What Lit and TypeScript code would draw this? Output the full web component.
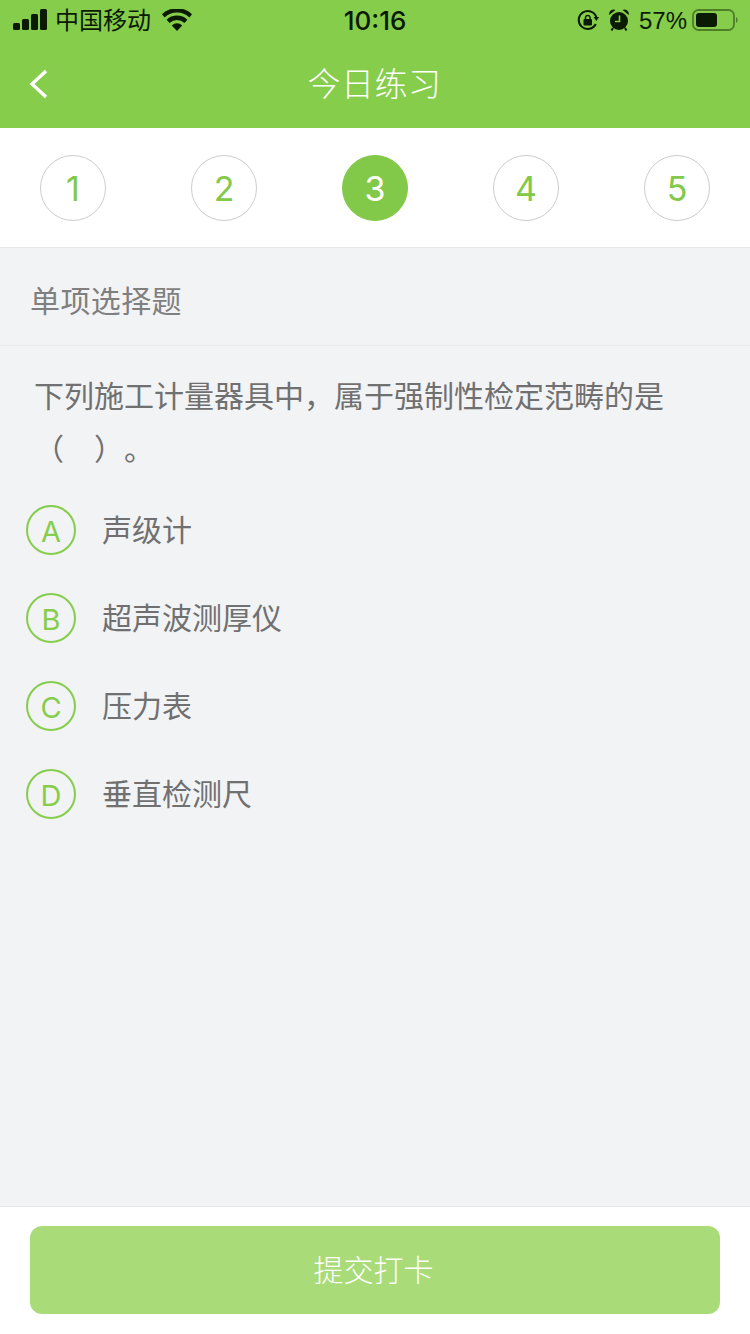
import { LitElement, html, css } from "lit";
import { customElement } from "lit/decorators.js";

const steps = [1, 2, 3, 4, 5];
const options = [
  ["A", "声级计"],
  ["B", "超声波测厚仪"],
  ["C", "压力表"],
  ["D", "垂直检测尺"],
];

@customElement("app-root")
export class AppRoot extends LitElement {
  static styles = css`
    :host {
      display: flex;
      flex-direction: column;
      width: 750px;
      height: 1334px;
      overflow: hidden;
      background: #f2f3f5;
      font-family: "Noto Sans CJK SC", "Liberation Sans", sans-serif;
      font-weight: 400;
      color: #707070;
      text-spacing-trim: space-all;
    }
    .header { background: #86cd4b; height: 128px; flex: none; display: flex; flex-direction: column; font-weight: 300; }
    .status { height: 40px; display: flex; align-items: center; justify-content: space-between; color: #0b1a02; position: relative; padding: 0 12px 0 13px; }
    .status-group { display: flex; align-items: center; }
    .carrier { font-size: 24px; font-weight: 400; margin-left: 8px; line-height: 38px; height: 40px; }
    .wifi { margin-left: 11px; }
    .time { position: absolute; left: 0; right: 0; top: 1px; text-align: center; font-family: "Inter", "Liberation Sans", sans-serif; font-size: 26px; font-weight: 500; line-height: 40px; }
    .pct { font-family: "Liberation Sans", sans-serif; font-size: 24px; font-weight: 400; margin: 0 5px 0 10px; padding-top: 2px; }
    .alarm { margin-left: 10px; }
    .nav { flex: 1; display: flex; align-items: center; justify-content: center; position: relative; color: #fff; font-size: 33px; letter-spacing: 0.5px; padding: 0 1px 4px 0; }
    .back { position: absolute; left: 28px; top: 27px; }
    .steps { background: #fff; height: 120px; box-sizing: border-box; border-bottom: 1px solid #e6e7e9; padding: 27px 40px 0; display: flex; justify-content: space-between; flex: none; }
    .step { width: 66px; height: 66px; box-sizing: border-box; border-radius: 50%; border: 1px solid #ccc; display: flex; align-items: center; justify-content: center; font-family: "Inter", "Liberation Sans", sans-serif; font-weight: 400; font-size: 34px; color: #82c94a; }
    .step.active { background: #82c94a; border-color: #82c94a; color: #fff; }
    .type { height: 98px; box-sizing: border-box; border-bottom: 1px solid #e6e7e9; padding: 4px 0 0 30px; display: flex; align-items: center; font-size: 30px; letter-spacing: 0.4px; color: #7f7f7f; flex: none; }
    .question { margin: 0; padding: 22px 60px 0 34px; font-size: 30px; line-height: 53px; flex: none; }
    .options { display: flex; flex-direction: column; gap: 38px; padding: 31px 0 0 26px; flex: 1; }
    .option { display: flex; align-items: center; height: 50px; }
    .letter { width: 50px; height: 50px; box-sizing: border-box; border: 2px solid #86cd4b; border-radius: 50%; padding-top: 2px; display: flex; align-items: center; justify-content: center; font-family: "Inter", "Liberation Sans", sans-serif; font-weight: 400; font-size: 29px; color: #86cd4b; flex: none; }
    .label { margin-left: 26px; font-size: 30px; padding-bottom: 4px; }
    .footer { height: 128px; box-sizing: border-box; background: #fff; border-top: 1px solid #e6e7e9; padding: 19px 30px 0; flex: none; }
    .submit { height: 88px; box-sizing: border-box; border-radius: 12px; background: #a9dc79; color: #fff; display: flex; align-items: center; justify-content: center; font-size: 30px; font-weight: 300; padding: 0 3px 4px 0; }
  `;

  render() {
    return html`
      <div class="header">
        <div class="status">
          <div class="status-group">
            <svg width="34" height="22" viewBox="0 0 34 22" fill="#0b1a02">
              <rect x="0" y="14" width="7" height="7" rx="1.5"/>
              <rect x="9" y="10" width="7" height="11" rx="1.5"/>
              <rect x="18" y="5" width="7" height="16" rx="1.5"/>
              <rect x="27" y="0" width="7" height="21" rx="1.5"/>
            </svg>
            <span class="carrier">中国移动</span>
            <svg class="wifi" width="30" height="22" viewBox="0 0 30 22" fill="#0b1a02">
              <path d="M15 22 L9.8 16.4 A7.6 7.6 0 0 1 20.2 16.4 Z"/>
              <path d="M7.6 14 L4.6 10.8 A15 15 0 0 1 25.4 10.8 L22.4 14 A10.8 10.8 0 0 0 7.6 14 Z"/>
              <path d="M2.6 8.6 L0 5.2 A22 22 0 0 1 30 5.2 L27.4 8.6 A17.8 17.8 0 0 0 2.6 8.6 Z"/>
            </svg>
          </div>
          <div class="time">10:16</div>
          <div class="status-group">
            <svg width="22" height="22" viewBox="0 0 22 22" fill="none" stroke="#0b1a02">
              <path d="M18.8 15 A9 9 0 1 1 19.4 8.5" stroke-width="2"/>
              <path d="M16.5 8 L22 8 L19.4 12 Z" fill="#0b1a02" stroke="none"/>
              <rect x="6.5" y="10" width="8.5" height="6.5" rx="1" fill="#0b1a02" stroke="none"/>
              <path d="M8.5 10 V8.2 A2.3 2.3 0 0 1 13 8.2 V10" stroke-width="1.5"/>
            </svg>
            <svg class="alarm" width="20" height="22" viewBox="0 0 20 22" fill="#0b1a02">
              <circle cx="10" cy="12" r="9"/>
              <path d="M0.3 6 A4.4 4.4 0 0 1 6.4 1 Z M19.7 6 A4.4 4.4 0 0 0 13.6 1 Z"/>
              <path d="M4 19 L2.5 21.5 M16 19 L17.5 21.5" stroke="#0b1a02" stroke-width="2"/>
              <path d="M10.5 6.5 V12.5 H6" fill="none" stroke="#86cd4b" stroke-width="1.6"/>
            </svg>
            <span class="pct">57%</span>
            <svg width="46" height="24" viewBox="0 0 46 24">
              <rect x="1" y="2" width="41" height="20" rx="5.5" fill="none" stroke="#4f7e2a" stroke-width="1.8"/>
              <rect x="4" y="5" width="21" height="14" rx="3" fill="#0b1a02"/>
              <path d="M44 9 A3.5 3.5 0 0 1 44 15 Z" fill="#4f7e2a"/>
            </svg>
          </div>
        </div>
        <div class="nav">
          <svg class="back" width="22" height="34" viewBox="0 0 22 34" fill="none" stroke="#fff" stroke-width="3.4">
            <path d="M18 4 L4 17 L18 30"/>
          </svg>
          今日练习
        </div>
      </div>
      <div class="steps">
        ${steps.map((n) => html`<div class="step ${n === 3 ? "active" : ""}">${n}</div>`)}
      </div>
      <div class="type">单项选择题</div>
      <p class="question">下列施工计量器具中，属于强制性检定范畴的是（　）。</p>
      <div class="options">
        ${options.map(
          ([k, t]) => html`<div class="option"><div class="letter">${k}</div><div class="label">${t}</div></div>`
        )}
      </div>
      <div class="footer"><div class="submit">提交打卡</div></div>
    `;
  }
}
